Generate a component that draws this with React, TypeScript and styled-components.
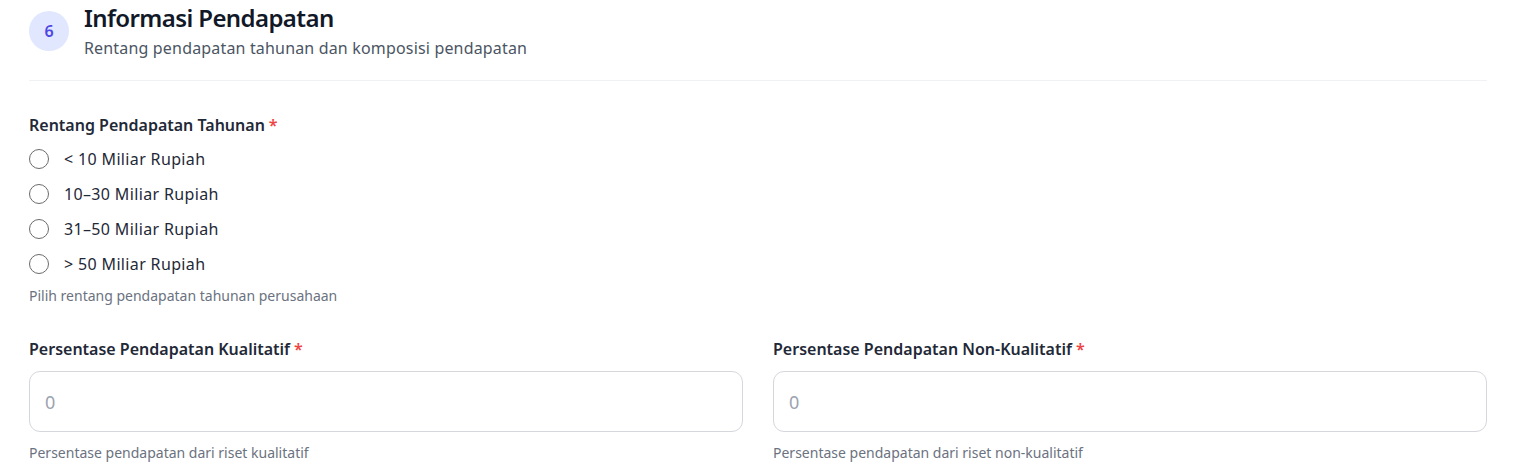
import React from "react";
import styled, { createGlobalStyle } from "styled-components";

const Global = createGlobalStyle`
  html, body { margin: 0; padding: 0; background: #ffffff; }
  body { font-family: "Noto Sans", "Open Sans", Arial, sans-serif; -webkit-font-smoothing: antialiased; }
  * { box-sizing: border-box; }
`;

const Page = styled.div`
  padding: 0 26px 0 29px;
`;

const Header = styled.div`
  display: flex;
  align-items: center;
  gap: 15px;
  padding: 2px 0 20px;
  border-bottom: 1px solid #f0f1f3;
`;

const Badge = styled.div`
  width: 40px;
  height: 40px;
  border-radius: 50%;
  background: #e0e7ff;
  color: #4f46e5;
  display: flex;
  align-items: center;
  justify-content: center;
  font-size: 16px;
  font-weight: 600;
  flex-shrink: 0;
`;

const HeadText = styled.div`
  display: flex;
  flex-direction: column;
`;

const Title = styled.h2`
  margin: 0;
  font-size: 24px;
  line-height: 32px;
  font-weight: 600;
  letter-spacing: -0.6px;
  color: #111827;
`;

const Subtitle = styled.p`
  margin: 2px 0 0;
  font-size: 16px;
  line-height: 24px;
  letter-spacing: 0.17px;
  color: #4b5563;
`;

const Body = styled.div`
  padding-top: 32px;
  display: flex;
  flex-direction: column;
`;

const Field = styled.div`
  display: flex;
  flex-direction: column;
`;

const Label = styled.label`
  font-size: 16px;
  line-height: 24px;
  font-weight: 600;
  color: #1f2937;
`;

const Req = styled.span`
  color: #ef4444;
  margin-left: 4px;
`;

const RadioList = styled.div`
  display: flex;
  flex-direction: column;
  gap: 11px;
  margin-top: 10px;
`;

const RadioRow = styled.label`
  display: flex;
  align-items: center;
  gap: 15px;
  height: 24px;
  font-size: 16px;
  letter-spacing: 0.35px;
  color: #1f2937;
  cursor: pointer;
`;

const RadioCircle = styled.span`
  width: 20px;
  height: 20px;
  border-radius: 50%;
  border: 1.5px solid #6b6b6b;
  background: #fff;
  flex-shrink: 0;
`;

const Help = styled.p<{ $gap?: number }>`
  margin: ${(p) => p.$gap ?? 11}px 0 0;
  font-size: 14px;
  line-height: 20px;
  color: #6b7280;
`;

const Grid = styled.div`
  display: grid;
  grid-template-columns: 1fr 1fr;
  gap: 30px;
  margin-top: 31px;
`;

const Input = styled.input`
  margin-top: 10px;
  height: 61px;
  width: 100%;
  border: 1px solid #d5d7dc;
  border-radius: 11px;
  padding: 0 15px;
  font-family: inherit;
  font-size: 18px;
  color: #111827;
  outline: none;
  &::placeholder { color: #9ca3af; }
`;

const options = ["< 10 Miliar Rupiah", "10–30 Miliar Rupiah", "31–50 Miliar Rupiah", "> 50 Miliar Rupiah"];

export default function App() {
  return (
    <>
      <Global />
      <Page>
        <Header>
          <Badge>6</Badge>
          <HeadText>
            <Title>Informasi Pendapatan</Title>
            <Subtitle>Rentang pendapatan tahunan dan komposisi pendapatan</Subtitle>
          </HeadText>
        </Header>
        <Body>
          <Field>
            <Label>
              Rentang Pendapatan Tahunan<Req>*</Req>
            </Label>
            <RadioList>
              {options.map((o) => (
                <RadioRow key={o}>
                  <RadioCircle />
                  {o}
                </RadioRow>
              ))}
            </RadioList>
            <Help $gap={10}>Pilih rentang pendapatan tahunan perusahaan</Help>
          </Field>
          <Grid>
            <Field>
              <Label>
                Persentase Pendapatan Kualitatif<Req>*</Req>
              </Label>
              <Input placeholder="0" />
              <Help $gap={11}>Persentase pendapatan dari riset kualitatif</Help>
            </Field>
            <Field>
              <Label>
                Persentase Pendapatan Non-Kualitatif<Req>*</Req>
              </Label>
              <Input placeholder="0" />
              <Help $gap={11}>Persentase pendapatan dari riset non-kualitatif</Help>
            </Field>
          </Grid>
        </Body>
      </Page>
    </>
  );
}
